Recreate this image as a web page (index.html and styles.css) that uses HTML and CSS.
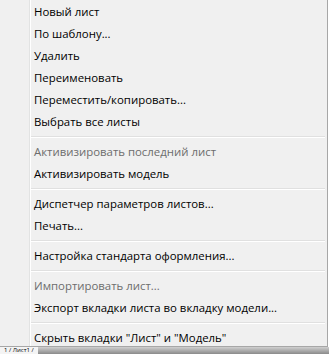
FILE: index.html
```html
<!DOCTYPE html>
<html lang="ru">
<head>
<meta charset="utf-8">
<link rel="stylesheet" href="styles.css">
</head>
<body>
<div class="menu">
  <div class="item">Новый лист</div>
  <div class="item">По шаблону...</div>
  <div class="item">Удалить</div>
  <div class="item">Переименовать</div>
  <div class="item">Переместить/копировать...</div>
  <div class="item">Выбрать все листы</div>
  <div class="sep"></div>
  <div class="item disabled">Активизировать последний лист</div>
  <div class="item">Активизировать модель</div>
  <div class="sep"></div>
  <div class="item">Диспетчер параметров листов...</div>
  <div class="item">Печать...</div>
  <div class="sep"></div>
  <div class="item">Настройка стандарта оформления...</div>
  <div class="sep"></div>
  <div class="item disabled">Импортировать лист...</div>
  <div class="item">Экспорт вкладки листа во вкладку модели...</div>
  <div class="sep"></div>
  <div class="item last">Скрыть вкладки "Лист" и "Модель"</div>
</div>
<div class="tabbar">
  <span class="tabtext">1 / Лист1 /</span>
</div>
</body>
</html>
```
FILE: styles.css
```css
html, body {
  margin: 0;
  padding: 0;
  background: #ffffff;
  width: 329px;
  height: 354px;
  overflow: hidden;
}
.menu {
  box-sizing: border-box;
  width: 328px;
  padding: 1px 0 0 0;
  background-color: #f0f0f0;
  background-image: linear-gradient(to right, transparent 29px, #e2e3e3 29px, #e2e3e3 30px, #ffffff 30px, #ffffff 31px, transparent 31px);
  border-right: 1px solid #a7a7a7;
  border-bottom: 1px solid #a7a7a7;
  font-family: "Open Sans", "Noto Sans", sans-serif;
  font-size: 11.4px;
  color: #000;
}
.item {
  height: 22px;
  line-height: 22px;
  padding-left: 34px;
  white-space: nowrap;
}
.item.last {
  height: 19px;
}
.item.disabled {
  color: #6d6d6d;
}
.sep {
  height: 8px;
  margin-left: 31px;
  margin-right: 2px;
  background-image: linear-gradient(to bottom, transparent 3px, #e0e0e0 3px, #e0e0e0 4px, #ffffff 4px, #ffffff 5px, transparent 5px);
}
.tabbar {
  height: 7px;
  background: linear-gradient(to bottom, #d0d0d0, #8a8a8a);
  display: flex;
  align-items: flex-start;
}
.tabtext {
  padding: 0 4px;
  background: #f4f4f4;
  font-family: "Open Sans", sans-serif;
  font-size: 6px;
  line-height: 7px;
  color: #000;
}
```
